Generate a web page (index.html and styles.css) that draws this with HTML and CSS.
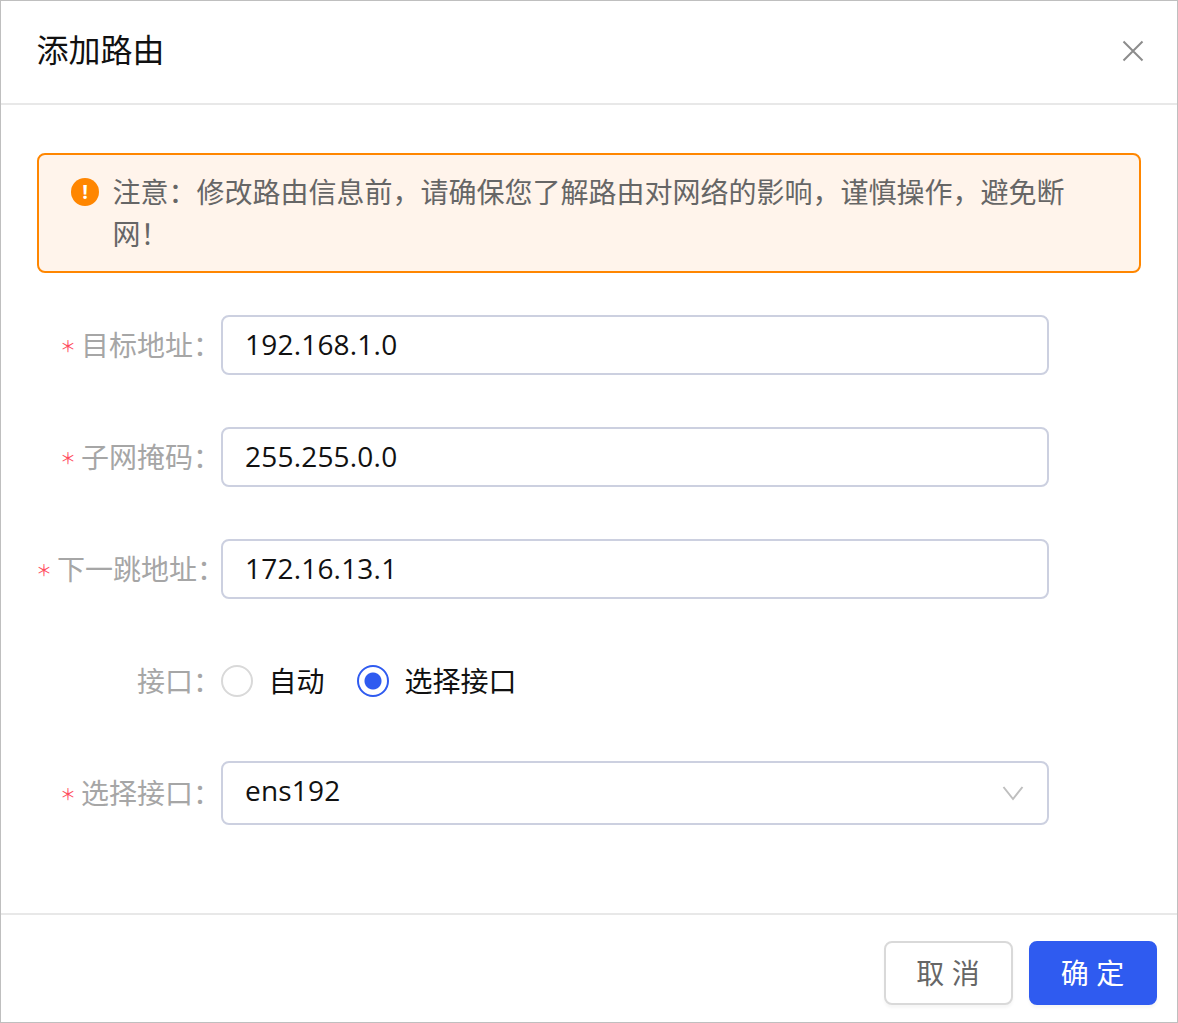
FILE: index.html
```html
<!DOCTYPE html>
<html lang="zh-CN">
<head>
    <meta charset="UTF-8">
    <title>添加路由</title>
    <link rel="stylesheet" href="styles.css">
</head>
<body>
    <div class="modal">
        <div class="modal-header">
            <span class="modal-title">添加路由</span>
            <svg class="close-icon" width="22" height="22" viewBox="0 0 22 22"><path d="M1.5 1.5 L20.5 20.5 M20.5 1.5 L1.5 20.5" stroke="#8c8c8c" stroke-width="2" fill="none"/></svg>
        </div>

        <div class="modal-body">
            <div class="alert">
                <span class="alert-icon">!</span>
                <p>注意：修改路由信息前，请确保您了解路由对网络的影响，谨慎操作，避免断网！</p>
            </div>

            <div class="form-row">
                <label class="form-label"><i class="required">＊</i>目标地址：</label>
                <div class="input">192.168.1.0</div>
            </div>
            <div class="form-row">
                <label class="form-label"><i class="required">＊</i>子网掩码：</label>
                <div class="input">255.255.0.0</div>
            </div>
            <div class="form-row">
                <label class="form-label"><i class="required">＊</i>下一跳地址：</label>
                <div class="input">172.16.13.1</div>
            </div>
            <div class="form-row form-row-radio">
                <label class="form-label">接口：</label>
                <div class="radio-group">
                    <span class="radio"></span>
                    <span class="radio-text">自动</span>
                    <span class="radio radio-checked"></span>
                    <span class="radio-text">选择接口</span>
                </div>
            </div>
            <div class="form-row form-row-select">
                <label class="form-label"><i class="required">＊</i>选择接口：</label>
                <div class="input select">
                    ens192
                    <svg width="22" height="16" viewBox="0 0 22 16"><path d="M1.5 2 L11 14 L20.5 2" stroke="#bfbfbf" stroke-width="2" fill="none"/></svg>
                </div>
            </div>
        </div>

        <div class="modal-footer">
            <button class="btn">取 消</button>
            <button class="btn btn-primary">确 定</button>
        </div>
    </div>
</body>
</html>
```

FILE: styles.css
```css
* {
    margin: 0;
    padding: 0;
    box-sizing: border-box;
}

body {
    font-family: "Open Sans", "Noto Sans CJK SC", sans-serif;
    background: #fff;
    height: 1023px;
    overflow: hidden;
}

.modal {
    width: 1178px;
    height: 1023px;
    border: 1px solid #bfbfbf;
    display: flex;
    flex-direction: column;
}

.modal-header {
    height: 104px;
    flex: none;
    padding: 0 33px 3px 35.5px;
    border-bottom: 2px solid #e8e8e8;
    display: flex;
    align-items: center;
    justify-content: space-between;
}

.modal-title {
    font-size: 32px;
    color: #111;
    margin-top: -6px;
}

.modal-body {
    flex: 1;
    padding: 48px 36px 0;
}

.alert {
    height: 120px;
    padding: 16px 60px 0 32px;
    border: 2px solid #ff8600;
    border-radius: 8px;
    background: #fff4eb;
    display: flex;
    align-items: flex-start;
    font-size: 28px;
    line-height: 42px;
    color: #666;
    margin-bottom: 42px;
}

.alert-icon {
    flex: none;
    width: 28px;
    height: 28px;
    margin: 7px 13.5px 0 0;
    border-radius: 50%;
    background: #ff8600;
    color: #fff;
    font-size: 20px;
    font-weight: 700;
    line-height: 28px;
    text-align: center;
}

.form-row {
    height: 60px;
    margin-bottom: 52px;
    display: flex;
    align-items: center;
}

.form-row-radio {
    margin-bottom: 50px;
}

.form-row-select {
    height: 64px;
    margin-bottom: 0;
}

.form-label {
    width: 184px;
    flex: none;
    padding-bottom: 2px;
    text-align: right;
    font-size: 28px;
    color: #a6a6a6;
    white-space: nowrap;
}

.required {
    display: inline-block;
    width: 20px;
    margin-left: -1px;
    margin-right: 1px;
    text-align: left;
    font-style: normal;
    font-size: 16px;
    line-height: 20px;
    color: #ff4d5e;
    vertical-align: 4px;
}

.input {
    width: 828px;
    height: 100%;
    border: 2px solid #ccd0e0;
    border-radius: 8px;
    padding: 0 22px 2px;
    display: flex;
    align-items: center;
    font-size: 28px;
    letter-spacing: 0.2px;
    color: #111;
}

.select {
    justify-content: space-between;
    padding: 0 23px 6px 22px;
}

.select svg {
    margin-top: 6px;
}

.radio-group {
    display: flex;
    align-items: center;
}

.radio {
    width: 32px;
    height: 32px;
    border-radius: 50%;
    border: 2px solid #d9d9d9;
    margin-right: 15.5px;
}

.radio-text {
    font-size: 28px;
    padding-bottom: 2px;
    color: #111;
    margin-right: 32.5px;
}

.radio-checked {
    border-color: #2f5bf0;
    background: radial-gradient(circle, #2f5bf0 0 8px, #fff 9px);
}

.modal-footer {
    height: 109px;
    flex: none;
    border-top: 2px solid #e8e8e8;
    padding: 26px 20px 0 0;
    display: flex;
    justify-content: flex-end;
    gap: 16px;
}

.btn {
    width: 129px;
    height: 64px;
    padding: 0 1px 2px 0;
    border: 2px solid #d9d9d9;
    border-radius: 8px;
    background: #fff;
    font-family: inherit;
    font-size: 28px;
    color: #666;
    box-shadow: 0 3px 3px rgba(0, 0, 0, 0.04);
}

.btn-primary {
    width: 128px;
    border-color: #2f5bf0;
    background: #2f5bf0;
    color: #fff;
}
```
